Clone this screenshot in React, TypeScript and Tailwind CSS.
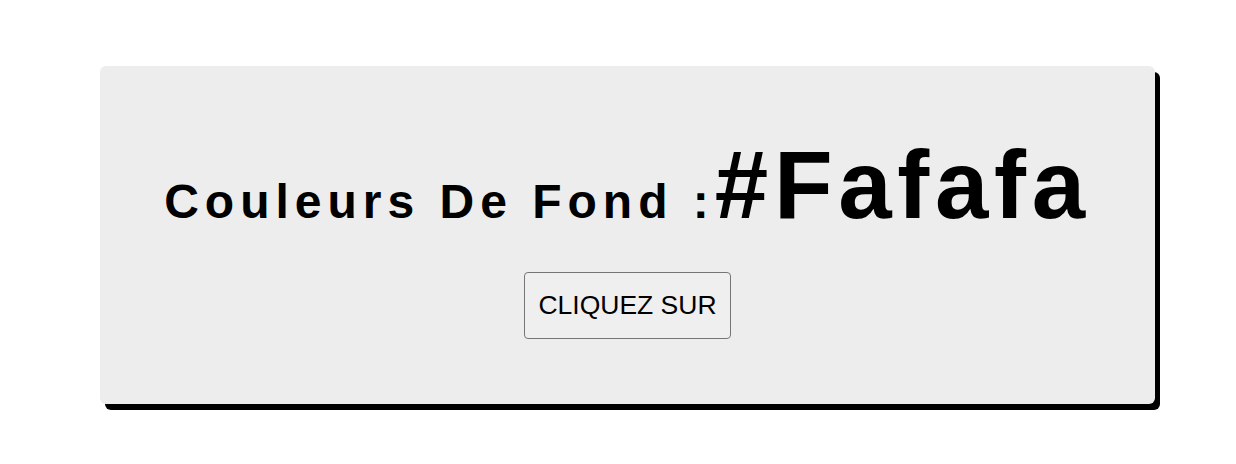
export default function App() {
    return (
        <div className="min-h-[464px] bg-white pt-[66px] pl-[100px]" style={{ fontFamily: '"Liberation Sans", Arial, sans-serif' }}>
            <div className="flex h-[338px] w-[1055px] flex-col items-center rounded-[6px] bg-[#ededed] pt-[71px] shadow-[5px_6px_0_0_#000]">
                <h1 className="font-bold leading-none text-black">
                    <span className="text-[48px] tracking-[6px]">Couleurs De Fond :</span>
                    <span className="text-[96px] tracking-[5.7px]">#Fafafa</span>
                </h1>

                <button className="mt-[39px] rounded-[4px] border border-[#767676] bg-[#efefef] px-[13.5px] py-[17px] text-[26.5px] leading-[31px] text-black">
                    CLIQUEZ SUR
                </button>
            </div>
        </div>
    );
}
